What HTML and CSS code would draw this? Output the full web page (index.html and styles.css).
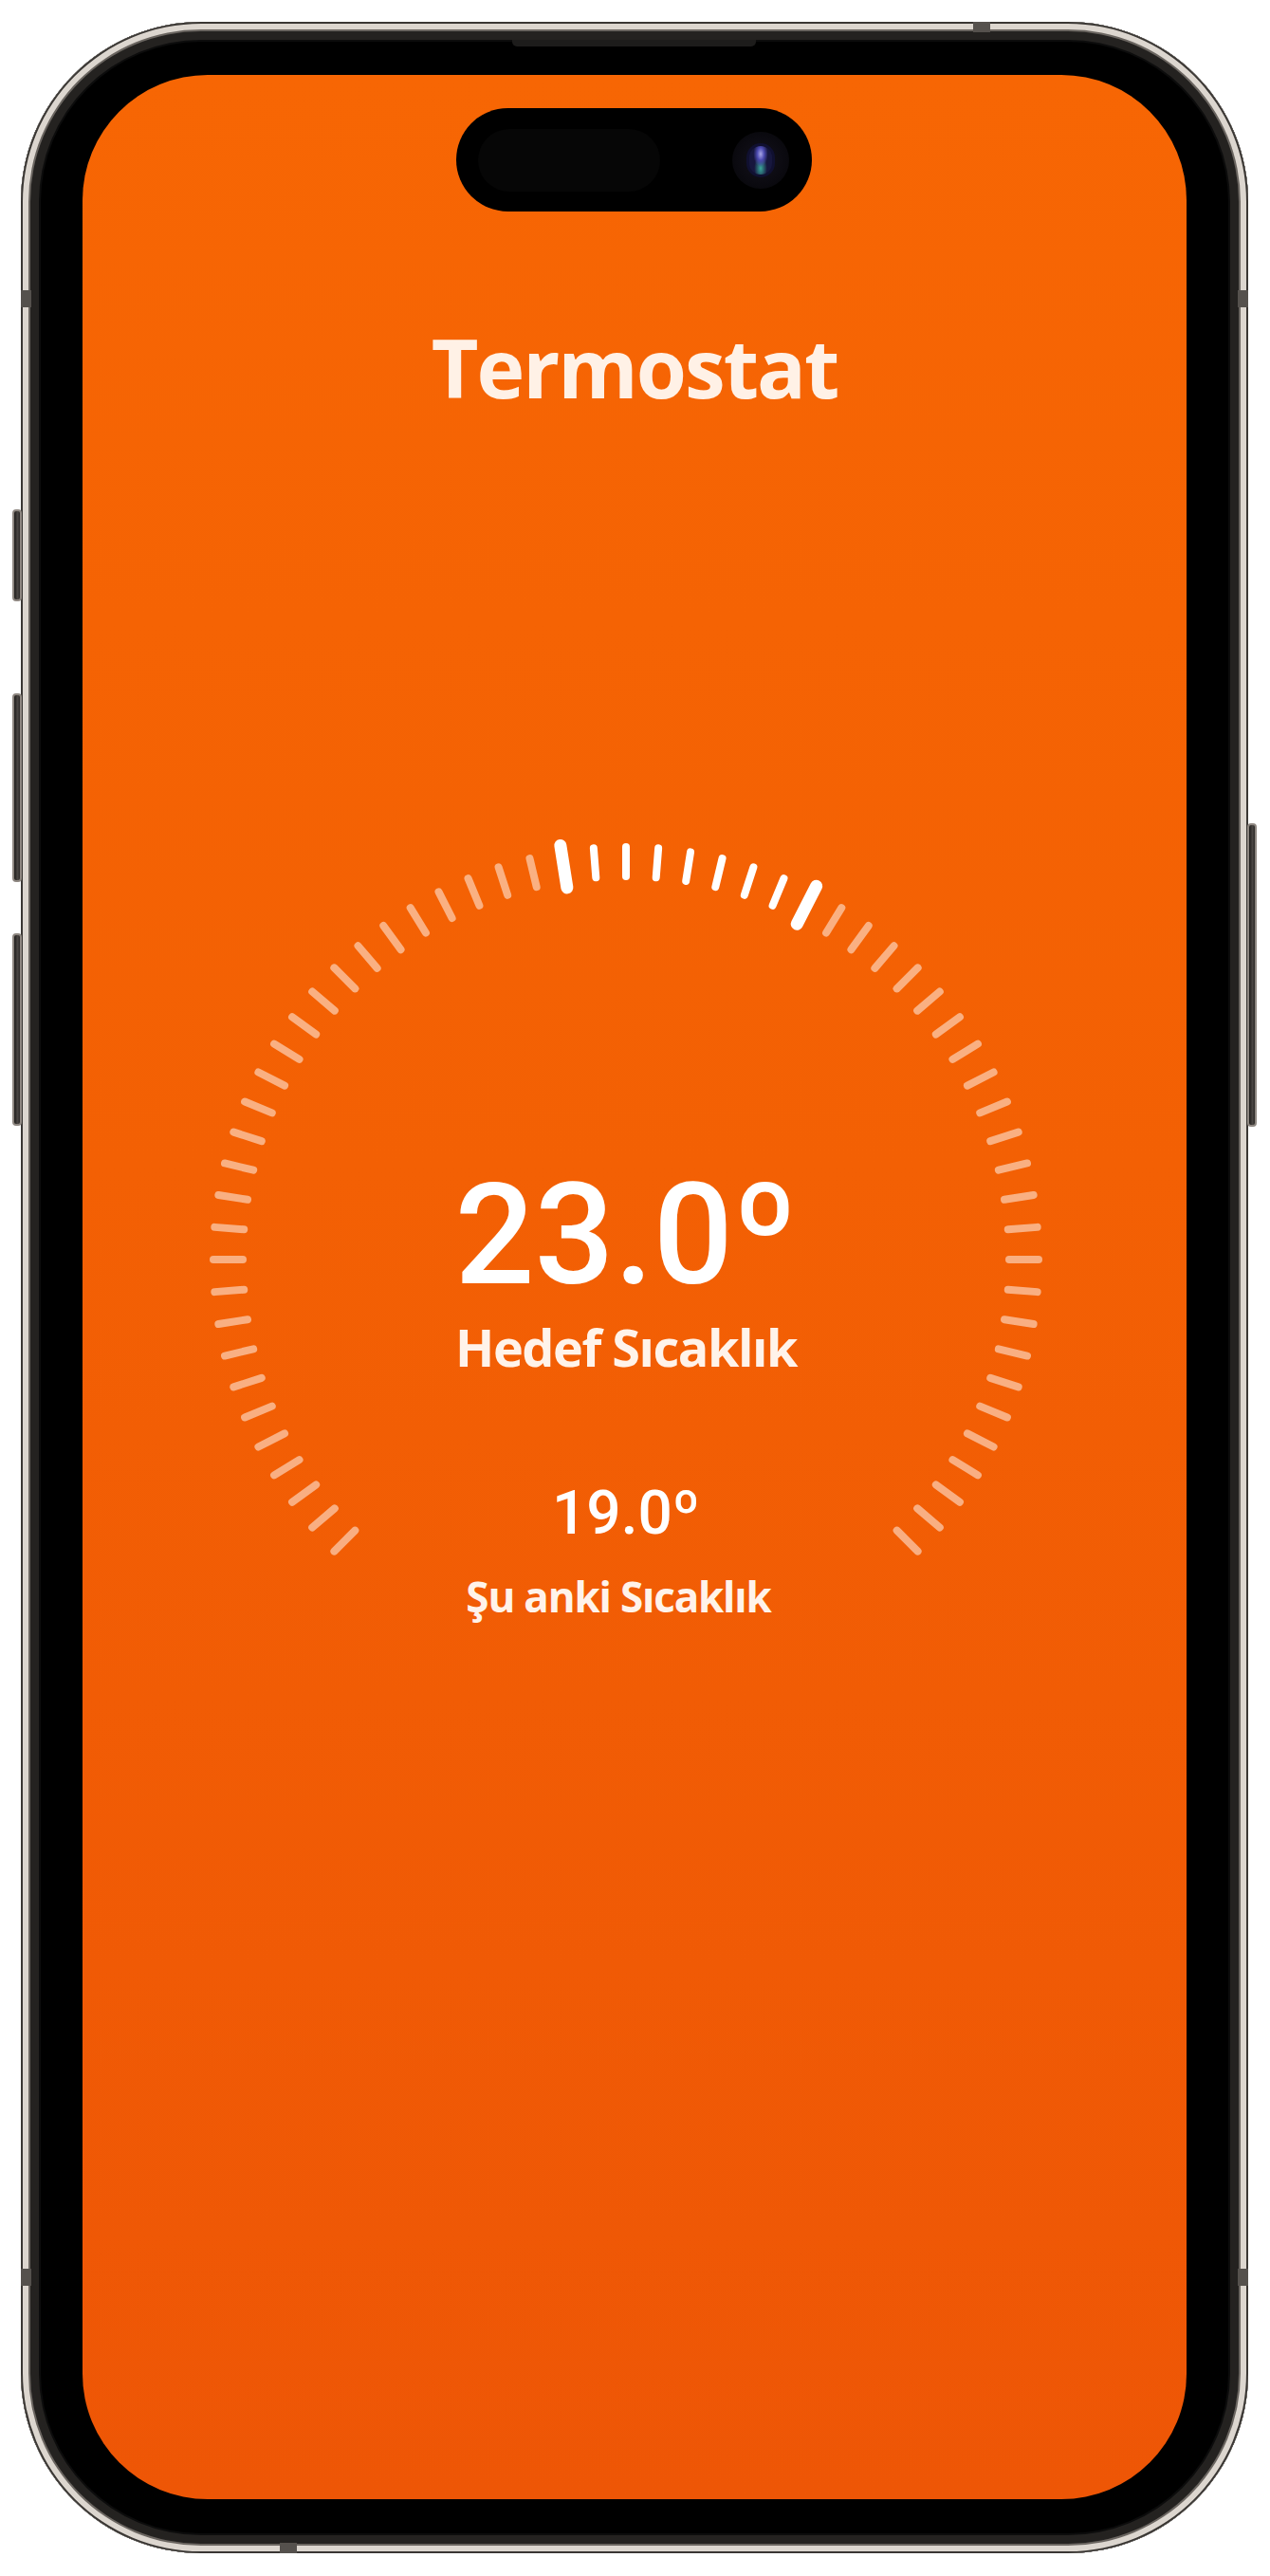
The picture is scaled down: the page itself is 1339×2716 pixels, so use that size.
FILE: index.html
```html
<!doctype html>
<html lang="tr">
  <head>
    <meta charset="UTF-8" />
    <meta name="viewport" content="width=device-width, initial-scale=1.0" />
    <title>Termostat</title>
    <link rel="stylesheet" href="styles.css">
  </head>
  <body>
    <div class="phone">
      <span class="side_btn btn_action"></span>
      <span class="side_btn btn_vol_up"></span>
      <span class="side_btn btn_vol_down"></span>
      <span class="side_btn btn_power"></span>
      <span class="band band_top"></span>
      <span class="band band_left_top"></span>
      <span class="band band_right_top"></span>
      <span class="band band_left_bottom"></span>
      <span class="band band_right_bottom"></span>
      <span class="band band_bottom"></span>
      <span class="speaker"></span>

      <div class="screen">
        <div class="island">
          <span class="island_sensor"></span>
          <span class="island_lens"><span class="lens_core"></span></span>
        </div>

        <h1 class="title">Termostat</h1>

        <div class="dial_wrap">
          <div class="dial">
            <svg class="dial_ticks" width="920" height="920" viewBox="0 0 920 920">
              <!-- dim ticks -->
              <g class="tick_dim">
                <line x1="460" y1="25" x2="460" y2="56" transform="rotate(-135 460 460)" />
                <line x1="460" y1="25" x2="460" y2="56" transform="rotate(-130.5 460 460)" />
                <line x1="460" y1="25" x2="460" y2="56" transform="rotate(-126 460 460)" />
                <line x1="460" y1="25" x2="460" y2="56" transform="rotate(-121.5 460 460)" />
                <line x1="460" y1="25" x2="460" y2="56" transform="rotate(-117 460 460)" />
                <line x1="460" y1="25" x2="460" y2="56" transform="rotate(-112.5 460 460)" />
                <line x1="460" y1="25" x2="460" y2="56" transform="rotate(-108 460 460)" />
                <line x1="460" y1="25" x2="460" y2="56" transform="rotate(-103.5 460 460)" />
                <line x1="460" y1="25" x2="460" y2="56" transform="rotate(-99 460 460)" />
                <line x1="460" y1="25" x2="460" y2="56" transform="rotate(-94.5 460 460)" />
                <line x1="460" y1="25" x2="460" y2="56" transform="rotate(-90 460 460)" />
                <line x1="460" y1="25" x2="460" y2="56" transform="rotate(-85.5 460 460)" />
                <line x1="460" y1="25" x2="460" y2="56" transform="rotate(-81 460 460)" />
                <line x1="460" y1="25" x2="460" y2="56" transform="rotate(-76.5 460 460)" />
                <line x1="460" y1="25" x2="460" y2="56" transform="rotate(-72 460 460)" />
                <line x1="460" y1="25" x2="460" y2="56" transform="rotate(-67.5 460 460)" />
                <line x1="460" y1="25" x2="460" y2="56" transform="rotate(-63 460 460)" />
                <line x1="460" y1="25" x2="460" y2="56" transform="rotate(-58.5 460 460)" />
                <line x1="460" y1="25" x2="460" y2="56" transform="rotate(-54 460 460)" />
                <line x1="460" y1="25" x2="460" y2="56" transform="rotate(-49.5 460 460)" />
                <line x1="460" y1="25" x2="460" y2="56" transform="rotate(-45 460 460)" />
                <line x1="460" y1="25" x2="460" y2="56" transform="rotate(-40.5 460 460)" />
                <line x1="460" y1="25" x2="460" y2="56" transform="rotate(-36 460 460)" />
                <line x1="460" y1="25" x2="460" y2="56" transform="rotate(-31.5 460 460)" />
                <line x1="460" y1="25" x2="460" y2="56" transform="rotate(-27 460 460)" />
                <line x1="460" y1="25" x2="460" y2="56" transform="rotate(-22.5 460 460)" />
                <line x1="460" y1="25" x2="460" y2="56" transform="rotate(-18 460 460)" />
                <line x1="460" y1="25" x2="460" y2="56" transform="rotate(-13.5 460 460)" />
                <line x1="460" y1="25" x2="460" y2="56" transform="rotate(31.5 460 460)" />
                <line x1="460" y1="25" x2="460" y2="56" transform="rotate(36 460 460)" />
                <line x1="460" y1="25" x2="460" y2="56" transform="rotate(40.5 460 460)" />
                <line x1="460" y1="25" x2="460" y2="56" transform="rotate(45 460 460)" />
                <line x1="460" y1="25" x2="460" y2="56" transform="rotate(49.5 460 460)" />
                <line x1="460" y1="25" x2="460" y2="56" transform="rotate(54 460 460)" />
                <line x1="460" y1="25" x2="460" y2="56" transform="rotate(58.5 460 460)" />
                <line x1="460" y1="25" x2="460" y2="56" transform="rotate(63 460 460)" />
                <line x1="460" y1="25" x2="460" y2="56" transform="rotate(67.5 460 460)" />
                <line x1="460" y1="25" x2="460" y2="56" transform="rotate(72 460 460)" />
                <line x1="460" y1="25" x2="460" y2="56" transform="rotate(76.5 460 460)" />
                <line x1="460" y1="25" x2="460" y2="56" transform="rotate(81 460 460)" />
                <line x1="460" y1="25" x2="460" y2="56" transform="rotate(85.5 460 460)" />
                <line x1="460" y1="25" x2="460" y2="56" transform="rotate(90 460 460)" />
                <line x1="460" y1="25" x2="460" y2="56" transform="rotate(94.5 460 460)" />
                <line x1="460" y1="25" x2="460" y2="56" transform="rotate(99 460 460)" />
                <line x1="460" y1="25" x2="460" y2="56" transform="rotate(103.5 460 460)" />
                <line x1="460" y1="25" x2="460" y2="56" transform="rotate(108 460 460)" />
                <line x1="460" y1="25" x2="460" y2="56" transform="rotate(112.5 460 460)" />
                <line x1="460" y1="25" x2="460" y2="56" transform="rotate(117 460 460)" />
                <line x1="460" y1="25" x2="460" y2="56" transform="rotate(121.5 460 460)" />
                <line x1="460" y1="25" x2="460" y2="56" transform="rotate(126 460 460)" />
                <line x1="460" y1="25" x2="460" y2="56" transform="rotate(130.5 460 460)" />
                <line x1="460" y1="25" x2="460" y2="56" transform="rotate(135 460 460)" />
              </g>
              <!-- range between current and target -->
              <g class="tick_active">
                <line x1="460" y1="25" x2="460" y2="56" transform="rotate(-4.5 460 460)" />
                <line x1="460" y1="25" x2="460" y2="56" transform="rotate(0 460 460)" />
                <line x1="460" y1="25" x2="460" y2="56" transform="rotate(4.5 460 460)" />
                <line x1="460" y1="25" x2="460" y2="56" transform="rotate(9 460 460)" />
                <line x1="460" y1="25" x2="460" y2="56" transform="rotate(13.5 460 460)" />
                <line x1="460" y1="25" x2="460" y2="56" transform="rotate(18 460 460)" />
                <line x1="460" y1="25" x2="460" y2="56" transform="rotate(22.5 460 460)" />
              </g>
              <g class="tick_marker">
                <line x1="460" y1="18" x2="460" y2="63" transform="rotate(-9 460 460)" />
                <line x1="460" y1="18" x2="460" y2="63" transform="rotate(27 460 460)" />
              </g>
            </svg>

            <div class="readout">
              <div class="target_temp">23.0º</div>
              <div class="label label_target">Hedef Sıcaklık</div>
              <div class="current_temp">19.0º</div>
              <div class="label label_current">Şu anki Sıcaklık</div>
            </div>
          </div>
        </div>
      </div>
    </div>
  </body>
</html>
```

FILE: styles.css
```css
:root {
  --font-text: "Open Sans", "Noto Sans", sans-serif;
  --font-digits: Roboto, "Noto Sans", sans-serif;

  --screen-top: #f76604;
  --screen-mid: #f36004;
  --screen-bottom: #ee5606;
  --cream: #fff1e6;

  --rim-light: #dcd6cf;
  --rim-dark: #3f3c39;
}

html,
body {
  margin: 0;
  background: #ffffff;
}
body {
  padding: 23px 0 0 22px;
  height: 2693px;
  box-sizing: border-box;
  overflow: hidden;
}

/* PHONE */
.phone {
  position: relative;
  width: 1294px;
  height: 2669px;
  box-sizing: border-box;
  padding: 56px 65px 57px;
  border-radius: 190px;
  background: #000;
  box-shadow: inset 0 0 0 2px #3a3734, inset 0 0 0 8px var(--rim-light),
    inset 0 0 0 10px #6a6560, inset 0 0 0 19px #242220,
    inset 0 0 0 21px #0c0c0c;
}

.side_btn {
  position: absolute;
  width: 10px;
  box-sizing: border-box;
  border: 2px solid #8f8882;
  border-radius: 4px;
  background: linear-gradient(90deg, #1f1d1b, #4a4643 60%, #2a2826);
}
.btn_action {
  left: -9px;
  top: 514px;
  height: 97px;
}
.btn_vol_up {
  left: -9px;
  top: 708px;
  height: 199px;
}
.btn_vol_down {
  left: -9px;
  top: 961px;
  height: 203px;
}
.btn_power {
  right: -9px;
  top: 845px;
  height: 320px;
}

/* antenna bands on the rim */
.band {
  position: absolute;
  background: #55514d;
}
.band_top {
  top: 0;
  left: 1004px;
  width: 18px;
  height: 11px;
}
.band_bottom {
  bottom: 0;
  left: 273px;
  width: 18px;
  height: 11px;
}
.band_left_top,
.band_left_bottom {
  left: 0;
  width: 11px;
  height: 18px;
}
.band_right_top,
.band_right_bottom {
  right: 0;
  width: 11px;
  height: 18px;
}
.band_left_top,
.band_right_top {
  top: 283px;
}
.band_left_bottom,
.band_right_bottom {
  bottom: 282px;
}

.speaker {
  position: absolute;
  top: 19px;
  left: 518px;
  width: 257px;
  height: 7px;
  border-radius: 0 0 5px 5px;
  background: #1d1c1b;
}

/* SCREEN */
.screen {
  position: relative;
  height: 100%;
  border-radius: 132px;
  overflow: hidden;
  display: flex;
  flex-direction: column;
  align-items: center;
  background: linear-gradient(
    180deg,
    var(--screen-top) 0%,
    var(--screen-mid) 45%,
    var(--screen-bottom) 100%
  );
}

.island {
  position: absolute;
  top: 35px;
  left: 50%;
  width: 375px;
  height: 109px;
  margin-left: -188px;
  box-sizing: border-box;
  padding-left: 23px;
  border-radius: 55px;
  background: #000;
  display: flex;
  align-items: center;
  gap: 76px;
}
.island_sensor {
  width: 192px;
  height: 66px;
  border-radius: 33px;
  background: #060606;
}
.island_lens {
  width: 60px;
  height: 60px;
  border-radius: 50%;
  background: radial-gradient(circle, #14121c 0%, #0b0a10 60%, #050507 100%);
  display: flex;
  align-items: center;
  justify-content: center;
}
.lens_core {
  width: 24px;
  height: 30px;
  border-radius: 12px;
  background: radial-gradient(
      ellipse at 50% 28%,
      #a8a6e6 0%,
      #4c4ab0 22%,
      transparent 45%
    ),
    radial-gradient(ellipse at 50% 78%, #3aa69a 0%, transparent 40%),
    #17173e;
  box-shadow: 0 0 0 3px #101030;
}

.title {
  margin: 256px 0 0;
  font-family: var(--font-text);
  font-weight: 700;
  font-size: 86px;
  line-height: 1.2;
  letter-spacing: -2px;
  color: var(--cream);
}

/* DIAL */
.dial_wrap {
  margin-top: 430px;
  padding-right: 18px;
}
.dial {
  display: grid;
  width: 920px;
  height: 920px;
}
.dial > * {
  grid-area: 1 / 1;
}

.tick_dim line,
.tick_active line,
.tick_marker line {
  stroke-linecap: round;
  fill: none;
}
.tick_dim line {
  stroke: rgba(255, 255, 255, 0.5);
  stroke-width: 8;
}
.tick_active line {
  stroke: #ffffff;
  stroke-width: 8;
}
.tick_marker line {
  stroke: #ffffff;
  stroke-width: 13;
}

.readout {
  display: flex;
  flex-direction: column;
  align-items: center;
  padding-top: 354px;
  color: #ffffff;
}
.target_temp {
  font-family: var(--font-digits);
  font-weight: 500;
  font-size: 148px;
  line-height: 1.1;
}
.current_temp {
  margin-top: 111px;
  font-family: var(--font-digits);
  font-weight: 500;
  font-size: 64px;
  line-height: 1;
}
.label {
  font-family: var(--font-text);
  font-weight: 700;
  line-height: 1.2;
  color: #fff3ea;
}
.label_target {
  margin-top: 3px;
  font-size: 54px;
  letter-spacing: -1.5px;
}
.label_current {
  margin-top: 29px;
  padding-right: 16px;
  font-size: 44px;
  letter-spacing: -1.2px;
}
```
